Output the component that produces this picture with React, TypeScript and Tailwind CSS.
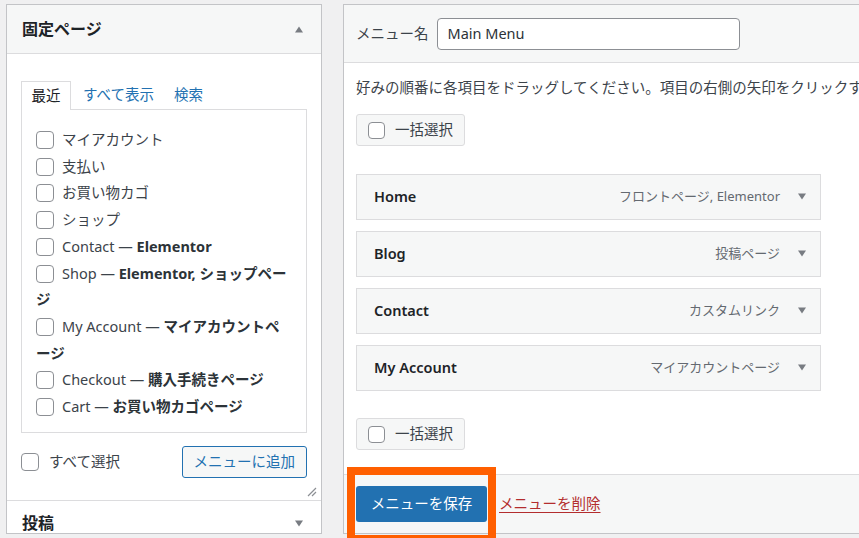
import React from "react";

const font = "font-['Noto_Sans','Noto_Sans_CJK_JP',sans-serif]";

function Box({ className = "" }: { className?: string }) {
  return (
    <span
      className={`inline-block w-[18px] h-[18px] shrink-0 rounded-[4px] border border-[#8c8f94] bg-white ${className}`}
    />
  );
}

function Tri({ up = false }: { up?: boolean }) {
  return (
    <svg width="10" height="7" viewBox="0 0 10 7" className="shrink-0">
      {up ? (
        <path d="M1 6.5 L5 0.5 L9 6.5 Z" fill="#787c82" />
      ) : (
        <path d="M1 0.5 L9 0.5 L5 6.5 Z" fill="#787c82" />
      )}
    </svg>
  );
}

const pages: { plain: string; bold?: string }[] = [
  { plain: "マイアカウント" },
  { plain: "支払い" },
  { plain: "お買い物カゴ" },
  { plain: "ショップ" },
  { plain: "Contact — ", bold: "Elementor" },
  { plain: "Shop — ", bold: "Elementor, ショップページ" },
  { plain: "My Account — ", bold: "マイアカウントページ" },
  { plain: "Checkout — ", bold: "購入手続きページ" },
  { plain: "Cart — ", bold: "お買い物カゴページ" },
];

const menuItems = [
  { title: "Home", type: "フロントページ, Elementor" },
  { title: "Blog", type: "投稿ページ" },
  { title: "Contact", type: "カスタムリンク" },
  { title: "My Account", type: "マイアカウントページ" },
];

function BulkSelect() {
  return (
    <div className="flex items-center gap-[10px] w-[109px] h-[32px] pl-[11px] rounded-[3px] border border-[#dcdcde] bg-[#f6f7f7] text-[14.5px] text-[#3c434a]">
      <Box className="!w-[17px] !h-[17px]" />
      <span>一括選択</span>
    </div>
  );
}

function LeftPanel() {
  return (
    <div className="w-[316px] h-[530px] shrink-0 flex flex-col border border-[#c3c4c7] bg-white">
      <div className="h-[49px] shrink-0 flex items-center justify-between pl-[15px] pr-[17px] bg-[#f6f7f7] border-b border-[#dcdcde]">
        <span className="text-[16px] font-bold text-[#1d2327]">固定ページ</span>
        <Tri up />
      </div>
      <div className="flex-1 flex flex-col px-[14px] pt-[27px] relative">
        <div className="flex items-end h-[28px] text-[14.5px]">
          <div className="h-[29px] w-[50px] flex items-center justify-center border border-b-0 border-[#dcdcde] bg-white text-[#1d2327] relative z-10 -mb-px">
            最近
          </div>
          <span className="text-[#2271b1] ml-[12px] h-[28px] flex items-center">すべて表示</span>
          <span className="text-[#2271b1] ml-[20px] h-[28px] flex items-center">検索</span>
        </div>
        <div className="h-[324px] border border-[#dcdcde] pt-[16px] pl-[14px] pr-[15px]">
          <ul className="text-[14.5px] text-[#3c434a] leading-[26.7px] [line-break:loose]">
            {pages.map((p, i) => (
              <li key={i}>
                <Box className="align-[-4px] mr-[8px]" />
                {p.plain}
                {p.bold && <strong className="font-bold text-[#2c3338]">{p.bold}</strong>}
              </li>
            ))}
          </ul>
        </div>
        <div className="flex items-center justify-between mt-[13px]">
          <div className="flex items-center gap-[10px] text-[14.5px] text-[#3c434a]">
            <Box />
            <span>すべて選択</span>
          </div>
          <div className="h-[32px] px-[11px] flex items-center rounded-[3px] border border-[#2271b1] bg-[#f6f7f7] text-[14.5px] text-[#2271b1]">
            メニューに追加
          </div>
        </div>
        <svg width="10" height="10" viewBox="0 0 10 10" className="absolute right-[4px] bottom-[3px]">
          <path d="M1 9 L9 1 M5 9 L9 5" stroke="#8c8f94" strokeWidth="1.2" />
        </svg>
      </div>
      <div className="h-[33px] shrink-0 flex items-center justify-between pl-[15px] pr-[17px] border-t border-[#dcdcde] bg-white">
        <span className="text-[16px] font-bold text-[#1d2327] translate-y-[6px]">投稿</span>
        <span className="translate-y-[6px]">
          <Tri />
        </span>
      </div>
    </div>
  );
}

function RightPanel() {
  return (
    <div className="w-[540px] h-[530px] shrink-0 flex flex-col border border-[#c3c4c7] bg-white relative">
      <div className="h-[58px] shrink-0 flex items-center gap-[8px] px-[12px] bg-[#f6f7f7] border-b border-[#dcdcde]">
        <span className="text-[14.5px] text-[#3c434a]">メニュー名</span>
        <div className="w-[303px] h-[32px] flex items-center px-[10px] rounded-[4px] border border-[#8c8f94] bg-white text-[14.5px] text-[#2c3338]">
          Main Menu
        </div>
      </div>
      <div className="flex-1 flex flex-col px-[12px] pt-[14px]">
        <p className="text-[14.5px] leading-[20px] text-[#3c434a] whitespace-nowrap">
          好みの順番に各項目をドラッグしてください。項目の右側の矢印をクリックすると、設定オプションが表示されます。
        </p>
        <div className="mt-[17px]">
          <BulkSelect />
        </div>
        <div className="mt-[28px] flex flex-col gap-[11px]">
          {menuItems.map((m) => (
            <div
              key={m.title}
              className="w-[465px] h-[46px] flex items-center pl-[17px] pr-[13px] border border-[#dcdcde] bg-[#f6f7f7]"
            >
              <span className="text-[14.5px] font-semibold text-[#1d2327]">{m.title}</span>
              <span className="ml-auto text-[13px] text-[#646970]">{m.type}</span>
              <span className="ml-[17px] -mt-[2px]">
                <Tri />
              </span>
            </div>
          ))}
        </div>
        <div className="mt-[27px]">
          <BulkSelect />
        </div>
      </div>
      <div className="h-[59px] shrink-0 flex items-center gap-[12px] px-[12px] border-t border-[#dcdcde] bg-[#f6f7f7]">
        <div className="w-[131px] h-[36px] flex items-center justify-center rounded-[3px] bg-[#2271b1] text-[14.5px] text-white">
          メニューを保存
        </div>
        <span className="text-[14.5px] text-[#b32d2e] underline underline-offset-[3px]">メニューを削除</span>
      </div>
      <div className="absolute left-[3px] top-[462px] w-[149px] h-[76px] border-[8px] border-[#ff5f00] pointer-events-none" />
    </div>
  );
}

export default function App() {
  return (
    <div className={`w-[859px] h-[538px] overflow-hidden bg-[#f0f0f1] flex gap-[21px] pt-[4px] pl-[6px] ${font}`}>
      <LeftPanel />
      <RightPanel />
    </div>
  );
}
